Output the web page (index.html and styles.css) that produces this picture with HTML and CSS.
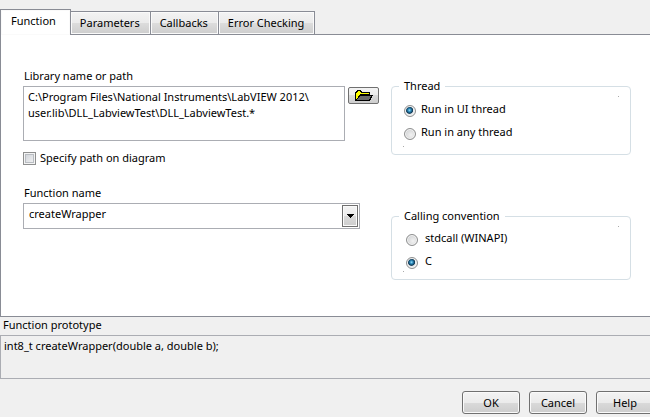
FILE: index.html
```html
<!doctype html>
<html lang="en">
<head>
  <meta charset="utf-8">
  <meta name="viewport" content="width=device-width,initial-scale=1">
  <title>Call Library Function</title>
  <link rel="stylesheet" href="styles.css">
</head>
<body>
<form class="dialog">
  <nav class="tabs" role="tablist">
    <button class="tab active" type="button" role="tab" aria-selected="true">Function</button>
    <button class="tab" type="button" role="tab">Parameters</button>
    <button class="tab" type="button" role="tab">Callbacks</button>
    <button class="tab" type="button" role="tab">Error Checking</button>
  </nav>

  <main class="panel">
    <div class="fields">
      <label class="caption" for="library">Library name or path</label>
      <div class="pathRow">
        <textarea class="path" id="library" spellcheck="false">C:\Program Files\National Instruments\LabVIEW 2012\
user.lib\DLL_LabviewTest\DLL_LabviewTest.*</textarea>
        <button class="browse" type="button" aria-label="Browse">
          <svg width="19" height="13" viewBox="0 0 19 13" shape-rendering="crispEdges">
            <path d="M1 12V3h1V2h1V1h4v1h1v1h8v3h3v1h-1v2h-1v2h-1v1z" fill="#000"/>
            <path d="M2 10V4h1V3h1V2h2v1h1v1h8v1H6v1H5v1H4v2H3v1z" fill="#ff0"/>
            <path d="M6 7h11v1h-1v2h-1v1H3v-1h1V9h1V8h1z" fill="#6b6b6b"/>
          </svg>
        </button>
      </div>

      <label class="check"><input type="checkbox">Specify path on diagram</label>

      <label class="caption" for="fn">Function name</label>
      <div class="combo">
        <select id="fn"><option>createWrapper</option></select>
        <span class="arrow"><svg width="7" height="4" viewBox="0 0 7 4" shape-rendering="crispEdges"><path d="M0 0h7v1H6v1H5v1H4v1H3V3H2V2H1V1H0z"/></svg></span>
      </div>
    </div>

    <div class="groups">
      <fieldset class="group">
        <legend>Thread</legend>
        <label><input type="radio" name="thread" checked>Run in UI thread</label>
        <label><input type="radio" name="thread">Run in any thread</label>
      </fieldset>
      <fieldset class="group convention">
        <legend>Calling convention</legend>
        <label><input type="radio" name="convention">stdcall (WINAPI)</label>
        <label><input type="radio" name="convention" checked>C</label>
      </fieldset>
    </div>
  </main>

  <label class="protoLabel" for="proto">Function prototype</label>
  <textarea class="proto" id="proto" readonly>int8_t createWrapper(double a, double b);</textarea>

  <div class="actions">
    <button class="btn" type="submit">OK</button>
    <button class="btn" type="button">Cancel</button>
    <button class="btn" type="button">Help</button>
  </div>
</form>
</body>
</html>
```

FILE: styles.css
```css
:root{
  --bg:#f0f0f0;
  --edge:#898c95;
  --field:#abadb3;
  --group:#d5dfe5;
  --face:linear-gradient(#f3f3f3,#ebebeb 50%,#dadada 50%,#cdcdcd);
}

*{box-sizing:border-box}
body{
  margin:0;
  background:var(--bg);
  color:#000;
  overflow:hidden;
}
body,button,input,select,textarea{font:11px/16px "Noto Sans","Open Sans",sans-serif}
button,select,textarea{color:inherit;border-radius:0;margin:0}
textarea{display:block;resize:none;overflow:hidden;outline:none}
.dialog{display:flex;flex-direction:column}

/* tabs */
.tabs{
  display:flex;
  align-items:flex-end;
  padding-top:9px;
}
.tab{
  height:23px;
  padding:0 10px 0 9px;
  border:1px solid var(--edge);
  border-left-width:0;
  border-bottom:0;
  background:linear-gradient(#f3f3f3,#ebebeb 50%,#dddddd 50%,#cdcdcd);
  box-shadow:inset 0 0 0 1px #fafafa;
}
.tab.active{
  height:26px;
  padding:0 14px 3px 10px;
  margin-bottom:-1px;
  border-left-width:1px;
  background:#fff;
  position:relative;
}

.panel{
  display:grid;
  grid-template-columns:1fr 240px;
  column-gap:12px;
  min-height:283px;
  padding:33px 19px 0 22px;
  border:1px solid var(--edge);
  border-right:0;
  background:#fff;
}

/* left side */
.caption{display:block;padding:0 1px;margin-bottom:2px}
.pathRow{
  display:flex;
  align-items:flex-start;
  gap:3px;
}
.path{
  flex:1;
  height:55px;
  padding:2px 4px;
  border:1px solid var(--field);
  background:#fff;
}
.browse{
  display:flex;
  align-items:center;
  justify-content:center;
  width:31px;
  height:17px;
  margin-top:1px;
  padding:0;
  border:1px solid #707070;
  border-radius:2px;
  background:var(--face);
}
.check{
  display:flex;
  align-items:center;
  gap:4px;
  margin:9px 0 19px;
}
.check input{
  appearance:none;
  width:13px;
  height:13px;
  margin:0;
  border:1px solid #8e8f8f;
  background:linear-gradient(135deg,#cbcfd5,#f6f6f6);
  box-shadow:inset 0 0 0 1px #f4f4f4,inset 0 0 0 2px #b9bdc2;
}
.combo{position:relative;margin-right:19px}
.combo select{
  appearance:none;
  display:block;
  width:100%;
  height:26px;
  padding:0 24px 4px 5px;
  border:1px solid var(--field);
  background:#fff;
}
.arrow{
  position:absolute;
  top:2px;
  right:2px;
  bottom:2px;
  width:16px;
  display:flex;
  align-items:center;
  justify-content:center;
  border:1px solid #707070;
  background:var(--face);
  box-shadow:inset 0 0 0 1px #fafafa;
  pointer-events:none;
}

/* right side */
.groups{
  display:flex;
  flex-direction:column;
  gap:53px;
  padding-top:10px;
}
.group{
  display:flex;
  flex-direction:column;
  gap:7px;
  min-width:0;
  margin:0;
  padding:7px 12px 14px;
  border:1px solid var(--group);
  border-radius:4px;
  background:
    linear-gradient(#aaa,#aaa) calc(100% - 11px) 9px/1px 1px no-repeat,
    linear-gradient(#aaa,#aaa) 11px calc(100% - 7px)/1px 1px no-repeat;
}
.group legend{padding:0 5px;margin-left:-5px}
.group label{display:flex;align-items:flex-start;gap:5px}
.group input{
  appearance:none;
  width:12px;
  height:12px;
  margin:4px 0 0;
  border:1px solid #8e8f8f;
  border-radius:50%;
  background:radial-gradient(circle at 60% 60%,#f2f2f2,#c6c8ca);
  box-shadow:inset 0 0 0 1px #f4f4f4;
}
.group input:checked{
  background:radial-gradient(circle at 45% 42%,#9fe0f8 0,#2f8fc0 18%,#0d3653 40%,#e8eaeb 50%);
}
.convention{padding:6px 14px 10px}
.convention legend{margin-left:-7px}
.convention label{gap:7px}

/* prototype and buttons */
.protoLabel{padding:0 3px;margin-bottom:2px}
.proto{
  width:100%;
  height:44px;
  padding:2px 3px;
  border:1px solid var(--field);
  border-right:0;
  background:var(--bg);
}
.actions{
  display:flex;
  justify-content:flex-end;
  gap:9px;
  margin:12px -4px 0 0;
}
.btn{
  width:58px;
  height:23px;
  padding:0;
  border:1px solid #707070;
  border-radius:3px;
  background:var(--face);
  box-shadow:inset 0 0 0 1px #fafafa;
}
```
